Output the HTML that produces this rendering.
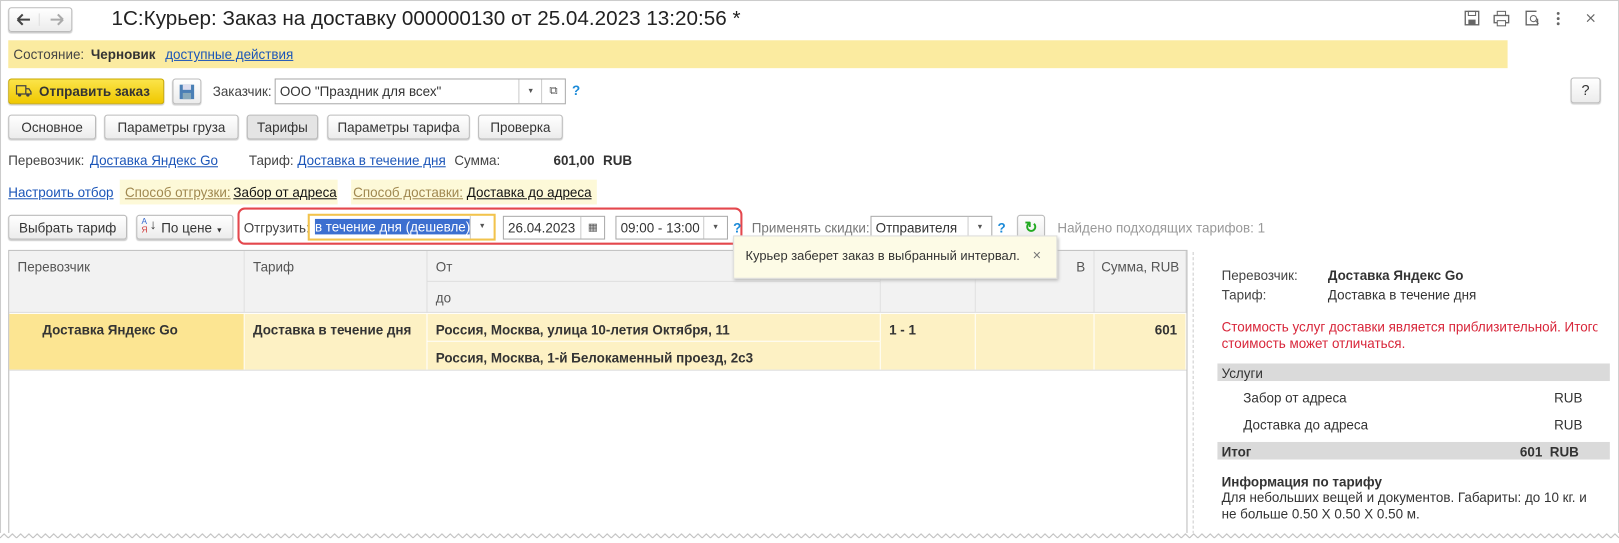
<!DOCTYPE html>
<html><head><meta charset="utf-8"><style>
html,body{margin:0;padding:0}
body{width:1619px;height:539px;overflow:hidden;background:#fff;position:relative}
#w{position:absolute;left:0;top:0;width:1568px;height:522px;transform:scale(1.0326);transform-origin:0 0;font-family:"Liberation Sans",Arial,sans-serif;font-size:13px;color:#333}
.a{position:absolute;white-space:nowrap}
.btn{position:absolute;height:23px;border:1px solid #bbb;border-radius:3px;background:linear-gradient(#fff,#ececec);box-shadow:0 1px 1px #ccc;text-align:center;line-height:23px;color:#333;box-sizing:border-box;white-space:nowrap}
.lnk{color:#1b55b8;text-decoration:underline}
.inp{position:absolute;height:23px;border:1px solid #aaa;background:#fff;box-sizing:border-box;line-height:21px;padding-left:4px;white-space:nowrap}
.dd{position:absolute;top:0;right:0;width:22px;height:21px;border-left:1px solid #ccc;text-align:center;font-size:7px;color:#555}
.th{position:absolute;background:#f2f2f2;border-right:1px solid #ddd;border-bottom:1px solid #ddd;box-sizing:border-box;padding:8px 8px;color:#555;white-space:nowrap}
.td{position:absolute;background:#fdf1c4;border-right:1px solid #fff;box-sizing:border-box;padding:8px 8px;font-weight:bold;color:#333;white-space:nowrap}
</style></head><body><div id="w">
<div style="position:absolute;left:0;top:0;width:1566px;height:522px;border:1px solid #ccc;border-bottom:none"></div>
<div class="btn" style="left:8px;top:7px;width:62px;height:24px;"></div>
<svg class="a" style="left:14px;top:12px" width="52" height="14"><path d="M3 7h12M3 7l5-5M3 7l5 5" fill="none" stroke="#444" stroke-width="2"/><path d="M24 1v12" stroke="#ddd"/><path d="M47 7H35M47 7l-5-5M47 7l-5 5" fill="none" stroke="#aaa" stroke-width="2"/></svg>
<div class="a" style="left:108px;top:7px;font-size:20px;color:#222">1С:Курьер: Заказ на доставку 000000130 от 25.04.2023 13:20:56 *</div>
<svg class="a" style="left:1418px;top:9px" width="130" height="20"><rect x="1" y="2" width="13" height="13" fill="none" stroke="#666" stroke-width="1.3"/><rect x="4" y="2" width="7" height="4" fill="none" stroke="#666"/><rect x="4" y="10" width="7" height="5" fill="#666"/>
<rect x="32" y="2" width="8" height="4" fill="none" stroke="#666"/><rect x="29" y="6" width="14" height="7" fill="none" stroke="#666" stroke-width="1.3"/><rect x="32" y="11" width="8" height="5" fill="#fff" stroke="#666"/>
<path d="M70 2h-10v13h11V9" fill="none" stroke="#666" stroke-width="1.3"/><circle cx="67" cy="9" r="3" fill="none" stroke="#666"/><path d="M69 11l3 3" stroke="#666"/>
<circle cx="91" cy="4" r="1.4" fill="#666"/><circle cx="91" cy="9" r="1.4" fill="#666"/><circle cx="91" cy="14" r="1.4" fill="#666"/>
<path d="M119 5l7 7M126 5l-7 7" stroke="#666" stroke-width="1.1"/></svg>
<div style="position:absolute;left:8px;top:39px;width:1452px;height:27px;background:#fbeba0"></div>
<div class="a" style="left:13px;top:45px;color:#444">Состояние:</div>
<div class="a" style="left:88px;top:45px;font-weight:bold">Черновик</div>
<div class="a lnk" style="left:160px;top:45px">доступные действия</div>
<div class="btn" style="left:8px;top:76px;width:151px;height:25px;background:linear-gradient(#fbe44a,#f0c800);border-color:#c9a800;font-weight:bold;color:#333;line-height:24px;padding-left:16px">Отправить заказ</div>
<svg class="a" style="left:15px;top:82px" width="16" height="13"><path d="M1 1h9v8H1zM10 4h3l2 3v2h-5" fill="none" stroke="#444" stroke-width="1.2"/><circle cx="4" cy="10" r="1.6" fill="#444"/><circle cx="12" cy="10" r="1.6" fill="#444"/></svg>
<div class="btn" style="left:167px;top:76px;width:28px;height:25px"></div>
<svg class="a" style="left:173px;top:81px" width="16" height="16"><rect x="1" y="1" width="14" height="14" fill="#4a7fb5"/><rect x="4" y="1" width="8" height="5" fill="#dde"/><rect x="4" y="9" width="8" height="6" fill="#8ab"/></svg>
<div class="a" style="left:206px;top:81px;color:#444">Заказчик:</div>
<div class="inp" style="left:266px;top:76px;width:282px;height:25px;line-height:23px">ООО "Праздник для всех"<div class="dd" style="right:22px;height:23px;line-height:23px">▼</div><div class="dd" style="height:23px;line-height:23px;font-size:11px">⧉</div></div>
<div class="a" style="left:554px;top:80px;color:#1b8ad8;font-weight:bold">?</div>
<div class="btn" style="left:1521px;top:75px;width:29px;height:25px;font-size:14px">?</div>
<div class="btn" style="left:8px;top:111px;width:85px;height:24px">Основное</div>
<div class="btn" style="left:101px;top:111px;width:130px;height:24px">Параметры груза</div>
<div class="btn" style="left:239px;top:111px;width:69px;height:24px;background:#e4e4e4">Тарифы</div>
<div class="btn" style="left:317px;top:111px;width:138px;height:24px">Параметры тарифа</div>
<div class="btn" style="left:463px;top:111px;width:82px;height:24px">Проверка</div>
<div class="a" style="left:8px;top:148px;color:#444">Перевозчик:</div>
<div class="a lnk" style="left:87px;top:148px">Доставка Яндекс Go</div>
<div class="a" style="left:241px;top:148px;color:#444">Тариф:</div>
<div class="a lnk" style="left:288px;top:148px">Доставка в течение дня</div>
<div class="a" style="left:440px;top:148px;color:#444">Сумма:</div>
<div class="a" style="left:536px;top:148px;font-weight:bold">601,00</div>
<div class="a" style="left:584px;top:148px;font-weight:bold">RUB</div>
<div class="a lnk" style="left:8px;top:179px">Настроить отбор</div>
<div style="position:absolute;left:116px;top:174px;width:211px;height:24px;background:#fdf9d8"></div>
<div class="a" style="left:121px;top:179px;color:#a08850;text-decoration:underline">Способ отгрузки:</div>
<div class="a" style="left:226px;top:179px;color:#111;text-decoration:underline">Забор от адреса</div>
<div style="position:absolute;left:340px;top:174px;width:238px;height:24px;background:#fdf9d8"></div>
<div class="a" style="left:342px;top:179px;color:#a08850;text-decoration:underline">Способ доставки:</div>
<div class="a" style="left:452px;top:179px;color:#111;text-decoration:underline">Доставка до адреса</div>
<div class="btn" style="left:8px;top:208px;width:115px;height:24px">Выбрать тариф</div>
<div class="btn" style="left:132px;top:208px;width:94px;height:24px;padding-left:14px">По цене <span style="font-size:7px">▼</span></div>
<div class="a" style="left:137px;top:211px;font-size:8px;line-height:8px;color:#36c">А<br><span style="color:#c33">Я</span></div>
<div class="a" style="left:145px;top:210px;font-size:13px">↓</div>
<div style="position:absolute;left:230px;top:201px;width:489px;height:36px;border:2px solid #e4474d;border-radius:7px;box-sizing:border-box"></div>
<div class="a" style="left:236px;top:213px;color:#444">Отгрузить:</div>
<div class="inp" style="left:298px;top:207px;width:182px;height:26px;border:2px solid #f2c34c;line-height:22px;padding-left:5px;overflow:hidden"><span style="background:#3c6fd0;color:#fff">в течение дня (дешевле)</span><div class="dd" style="height:22px;line-height:22px;background:#fff">▼</div></div>
<div class="inp" style="left:487px;top:209px;width:99px">26.04.2023<div class="dd" style="font-size:10px">▦</div></div>
<div class="inp" style="left:596px;top:209px;width:109px">09:00 - 13:00<div class="dd">▼</div></div>
<div class="a" style="left:710px;top:213px;color:#1b8ad8;font-weight:bold">?</div>
<div class="a" style="left:728px;top:213px;color:#777">Применять скидки:</div>
<div class="inp" style="left:843px;top:209px;width:118px">Отправителя<div class="dd">▼</div></div>
<div class="a" style="left:966px;top:213px;color:#1b8ad8;font-weight:bold">?</div>
<div class="btn" style="left:985px;top:208px;width:27px;height:24px;color:#2a2;font-weight:bold;font-size:15px">↻</div>
<div class="a" style="left:1024px;top:213px;color:#999">Найдено подходящих тарифов: 1</div>
<div style="position:absolute;left:8px;top:242px;width:1142px;height:280px;border:1px solid #bbb;box-sizing:border-box"></div>
<div class="th" style="left:9px;top:243px;width:228px;height:60px">Перевозчик</div>
<div class="th" style="left:237px;top:243px;width:177px;height:60px">Тариф</div>
<div class="th" style="left:414px;top:243px;width:439px;height:30px">От</div>
<div class="th" style="left:414px;top:273px;width:439px;height:30px">до</div>
<div class="th" style="left:853px;top:243px;width:92px;height:60px"></div>
<div class="th" style="left:945px;top:243px;width:115px;height:60px;text-align:right">В</div>
<div class="th" style="left:1060px;top:243px;width:89px;height:60px;text-align:right;padding:8px 6px 8px 0">Сумма, RUB</div>
<div class="td" style="left:9px;top:304px;width:228px;height:54px;background:#fce592;padding-left:32px">Доставка Яндекс Go</div>
<div class="td" style="left:237px;top:304px;width:177px;height:54px">Доставка в течение дня</div>
<div class="td" style="left:414px;top:304px;width:439px;height:27px;border-bottom:1px solid #fff">Россия, Москва, улица 10-летия Октября, 11</div>
<div class="td" style="left:414px;top:331px;width:439px;height:27px">Россия, Москва, 1-й Белокаменный проезд, 2с3</div>
<div class="td" style="left:853px;top:304px;width:92px;height:54px">1 - 1</div>
<div class="td" style="left:945px;top:304px;width:115px;height:54px"></div>
<div class="td" style="left:1060px;top:304px;width:89px;height:54px;text-align:right">601</div>
<div style="position:absolute;left:9px;top:358px;width:1140px;height:1px;background:#ddd"></div>
<div style="position:absolute;left:710px;top:228px;width:312px;height:40px;background:#fdfbe6;border:1px solid #ddd;box-shadow:1px 2px 3px #bbb"></div>
<div class="a" style="left:722px;top:241px;color:#333;font-size:12.5px">Курьер заберет заказ в выбранный интервал.</div>
<div class="a" style="left:1000px;top:239px;color:#777;font-size:14px">×</div>
<div style="position:absolute;left:1155px;top:244px;width:0;height:278px;border-left:1px dashed #ccc"></div>
<div class="a" style="left:1183px;top:259px;color:#444">Перевозчик:</div>
<div class="a" style="left:1286px;top:259px;font-weight:bold">Доставка Яндекс Go</div>
<div class="a" style="left:1183px;top:278px;color:#444">Тариф:</div>
<div class="a" style="left:1286px;top:278px">Доставка в течение дня</div>
<div class="a" style="left:1183px;top:309px;color:#d8263a;width:364px;overflow:hidden;line-height:16px;height:33px">Стоимость услуг доставки является приблизительной. Итоговая<br>стоимость может отличаться.</div>
<div style="position:absolute;left:1179px;top:352px;width:380px;height:17px;background:#dadada"></div>
<div class="a" style="left:1183px;top:354px">Услуги</div>
<div class="a" style="left:1204px;top:378px">Забор от адреса</div>
<div class="a" style="left:1505px;top:378px">RUB</div>
<div class="a" style="left:1204px;top:404px">Доставка до адреса</div>
<div class="a" style="left:1505px;top:404px">RUB</div>
<div style="position:absolute;left:1179px;top:428px;width:380px;height:17px;background:#dadada"></div>
<div class="a" style="left:1183px;top:430px;font-weight:bold">Итог</div>
<div class="a" style="left:1529px;top:430px;font-weight:bold;transform:translateX(-100%)">601&nbsp;&nbsp;RUB</div>
<div class="a" style="left:1183px;top:459px;font-weight:bold;font-size:13px">Информация по тарифу</div>
<div class="a" style="left:1183px;top:474px;line-height:16px">Для небольших вещей и документов. Габариты: до 10 кг. и<br>не больше 0.50 X 0.50 X 0.50 м.</div>
<svg class="a" style="left:0;top:516px" width="1568" height="10"><defs><pattern id="z" width="8" height="6" patternUnits="userSpaceOnUse"><path d="M0 5L4 1L8 5" fill="none" stroke="#bbb"/></pattern></defs><rect x="0" y="0" width="1568" height="10" fill="#fff"/><rect x="0" y="0" width="1568" height="6" fill="url(#z)"/></svg>
</div></body></html>
